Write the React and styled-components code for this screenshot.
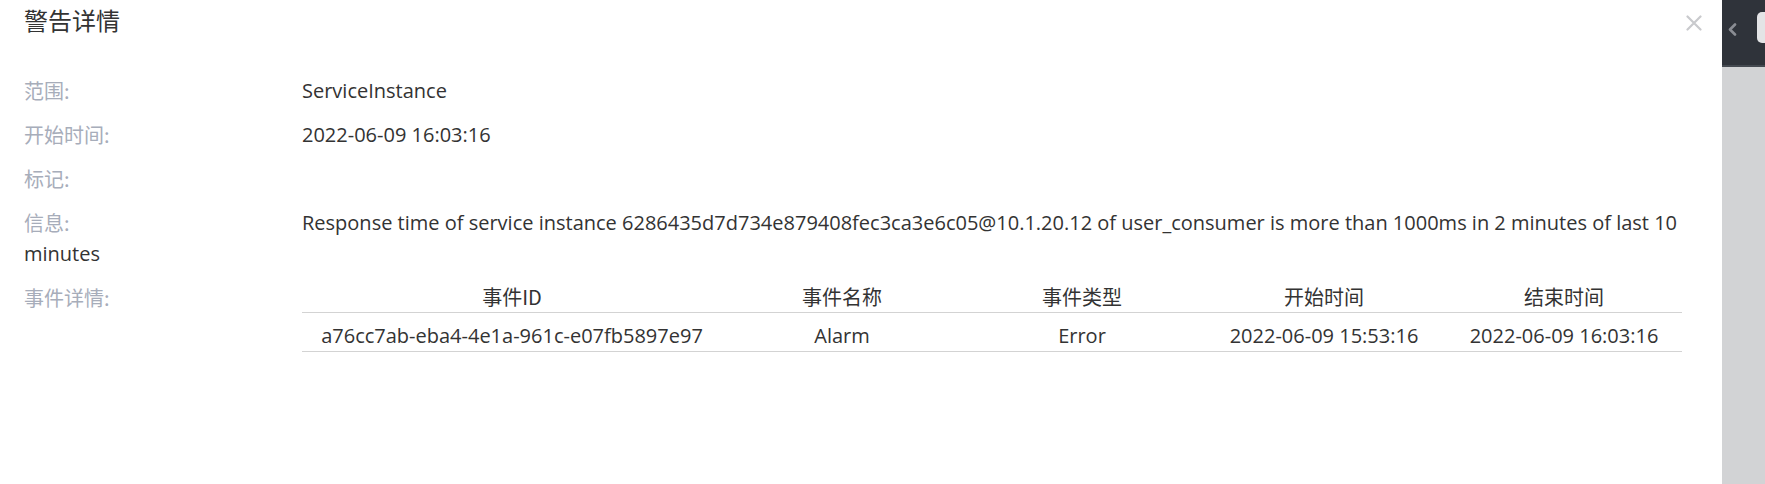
import React from "react";
import styled, { createGlobalStyle } from "styled-components";

const Global = createGlobalStyle`
  html, body { margin: 0; padding: 0; background: #fff; }
  body { font-family: "Open Sans", "Noto Sans CJK SC", sans-serif; }
  * { box-sizing: border-box; }
`;

const Page = styled.div`
  display: flex;
  width: 100vw;
  height: 100vh;
  overflow: hidden;
`;

const Drawer = styled.div`
  flex: 1;
  min-width: 0;
  background: #fff;
  display: flex;
  flex-direction: column;
`;

const Header = styled.div`
  height: 40px;
  display: flex;
  align-items: center;
  justify-content: space-between;
  padding: 0 20px 0 24px;
`;

const Title = styled.h3`
  margin: 0;
  font-family: "Noto Sans CJK SC", sans-serif;
  font-size: 24px;
  font-weight: 400;
  line-height: 40px;
  color: #333333;
`;

const CloseButton = styled.button`
  border: none;
  background: transparent;
  padding: 0;
  margin-top: 5px;
  width: 16px;
  height: 16px;
  display: flex;
  cursor: pointer;
`;

const Body = styled.div`
  padding: 35px 24px 0 24px;
  font-size: 20px;
  color: #333;
`;

const Row = styled.div`
  line-height: 31px;
  margin-bottom: 13px;
  display: ${(p) => (p.$flex ? "flex" : "block")};
  align-items: flex-start;
`;

const Label = styled.span`
  display: inline-block;
  vertical-align: top;
  width: 278px;
  height: 31px;
  flex: none;
  color: #a7adba;
  font-family: "Noto Sans CJK SC", sans-serif;
`;

const Value = styled.span`
  color: #333;
`;

const Table = styled.table`
  width: 1380px;
  table-layout: fixed;
  border-collapse: collapse;
  font-size: 20px;
  color: #333;
`;

const Th = styled.th`
  width: ${(p) => p.$w}px;
  font-weight: 400;
  font-family: "Noto Sans CJK SC", sans-serif;
  line-height: 30px;
  height: 30px;
  padding: 0;
  text-align: center;
  vertical-align: top;
  border-bottom: 1px solid #d3d3d3;
`;

const Td = styled.td`
  padding: 7px 0 0 0;
  height: 39px;
  line-height: 31px;
  text-align: center;
  vertical-align: top;
  white-space: nowrap;
  border-bottom: 1px solid #d3d3d3;
`;

const Strip = styled.div`
  width: 43px;
  flex: none;
  display: flex;
  flex-direction: column;
  background: #d2d3d5;
  overflow: hidden;
`;

const StripTop = styled.div`
  height: 67px;
  background: #2f333a;
  border-bottom: 2px solid #444950;
  display: flex;
  align-items: flex-start;
  padding: 12px 0 0 6px;
  gap: 20px;
`;

const Chevron = styled.svg`
  margin-top: 11px;
  flex: none;
`;

const Pill = styled.div`
  width: 24px;
  height: 31px;
  flex: none;
  border-radius: 5px;
  background: #e3e4e6;
`;

const columns = [
  { title: "事件ID", w: 420 },
  { title: "事件名称", w: 240 },
  { title: "事件类型", w: 240 },
  { title: "开始时间", w: 244 },
  { title: "结束时间", w: 236 },
];

const events = [
  ["a76cc7ab-eba4-4e1a-961c-e07fb5897e97", "Alarm", "Error", "2022-06-09 15:53:16", "2022-06-09 16:03:16"],
];

export default function App() {
  return (
    <>
      <Global />
      <Page>
        <Drawer>
          <Header>
            <Title>警告详情</Title>
            <CloseButton aria-label="close">
              <svg width="16" height="16" viewBox="0 0 16 16">
                <path d="M1.5 1.5 L14.5 14.5 M14.5 1.5 L1.5 14.5" stroke="#c9cacd" strokeWidth="2.2" strokeLinecap="round" />
              </svg>
            </CloseButton>
          </Header>
          <Body>
            <Row>
              <Label>范围:</Label>
              <Value>ServiceInstance</Value>
            </Row>
            <Row>
              <Label>开始时间:</Label>
              <Value>2022-06-09 16:03:16</Value>
            </Row>
            <Row>
              <Label>标记:</Label>
            </Row>
            <Row>
              <Label>信息:</Label>
              <Value>
                Response time of service instance 6286435d7d734e879408fec3ca3e6c05@10.1.20.12 of user_consumer is more than 1000ms in 2 minutes of last 10 minutes
              </Value>
            </Row>
            <Row $flex>
              <Label>事件详情:</Label>
              <Table>
                <thead>
                  <tr>
                    {columns.map((c) => (
                      <Th key={c.title} $w={c.w}>{c.title}</Th>
                    ))}
                  </tr>
                </thead>
                <tbody>
                  {events.map((e) => (
                    <tr key={e[0]}>
                      {e.map((v, i) => (
                        <Td key={i}>{v}</Td>
                      ))}
                    </tr>
                  ))}
                </tbody>
              </Table>
            </Row>
          </Body>
        </Drawer>
        <Strip>
          <StripTop>
            <Chevron width="9" height="13" viewBox="0 0 9 13">
              <polyline points="7,1.5 2,6.5 7,11.5" fill="none" stroke="#8a8d93" strokeWidth="2.6" strokeLinecap="round" strokeLinejoin="round" />
            </Chevron>
            <Pill />
          </StripTop>
        </Strip>
      </Page>
    </>
  );
}
